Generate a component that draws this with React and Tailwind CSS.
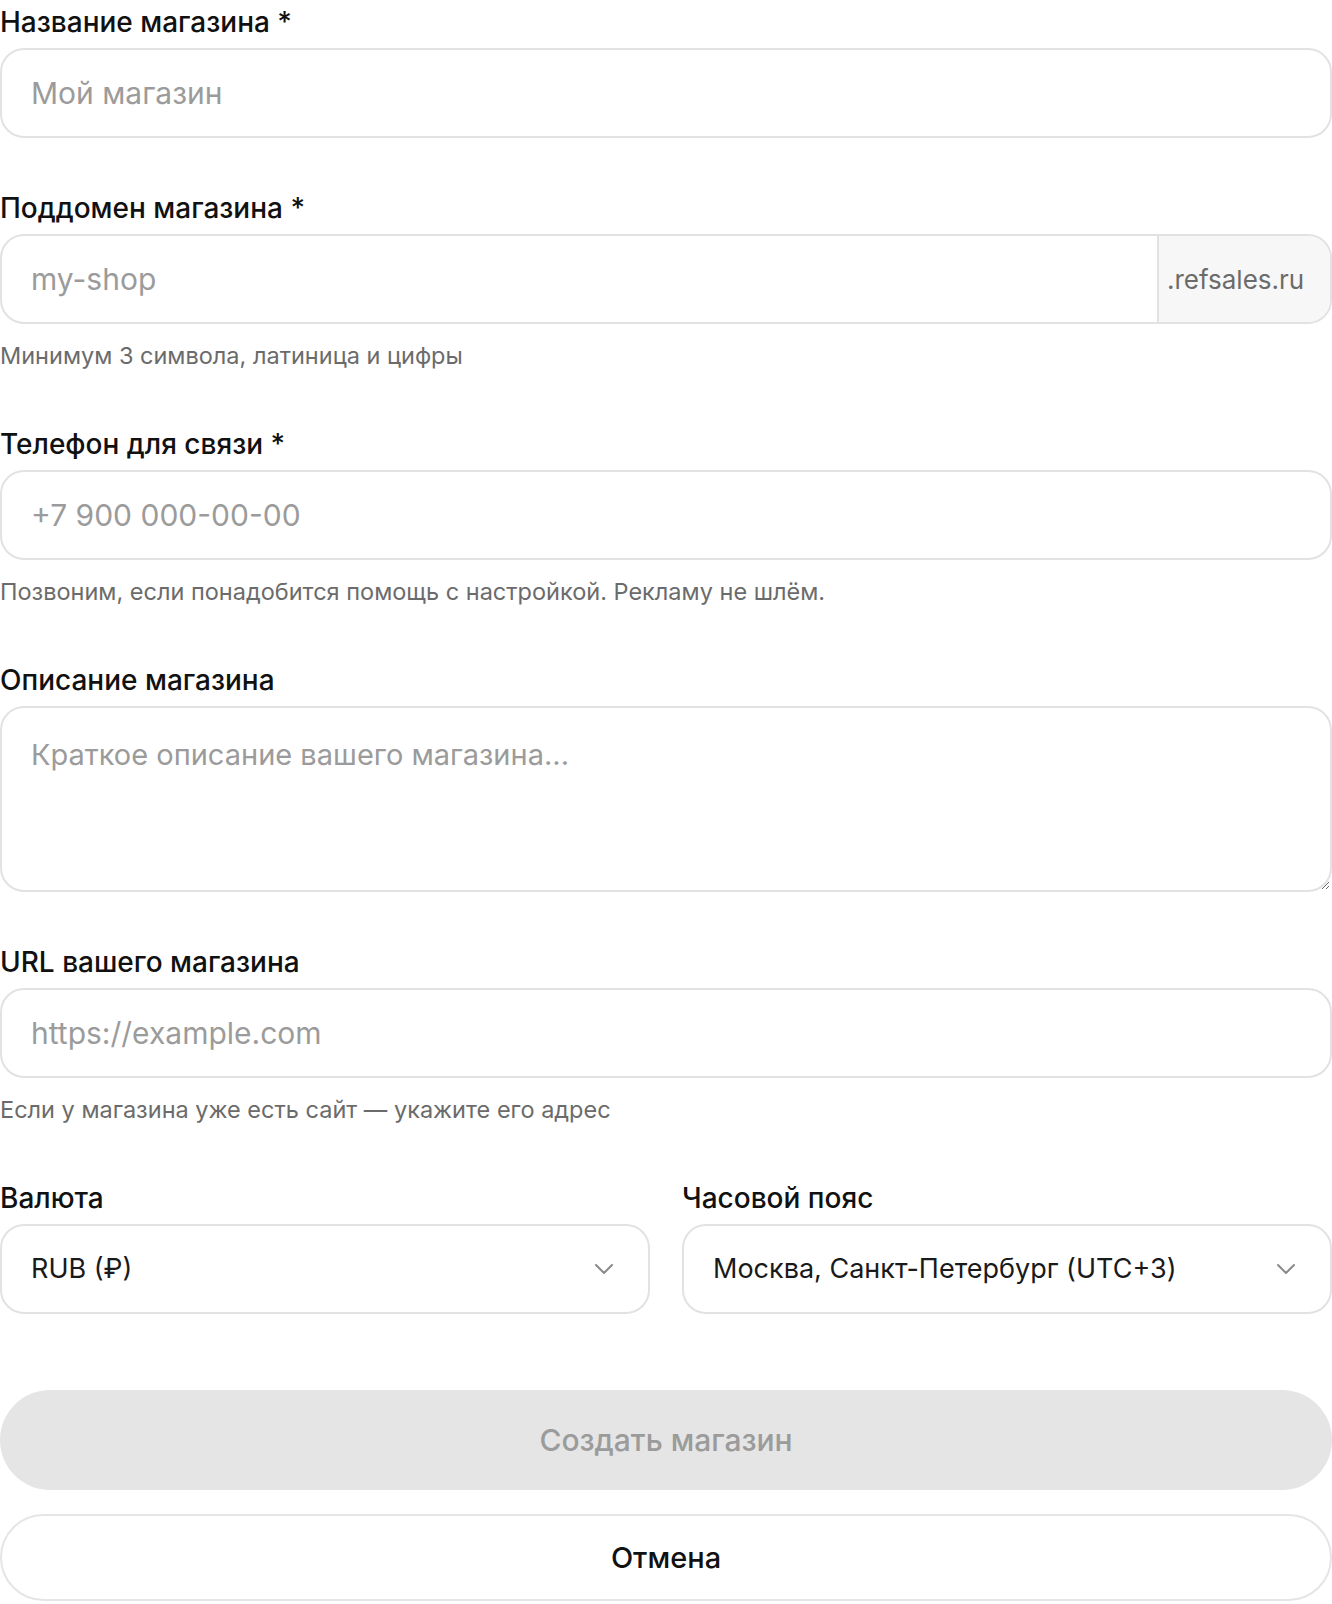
import { useState } from "react";
import { ChevronDown } from "lucide-react";

const labelCls = "block text-[28px] leading-[44px] font-medium text-[#111111] mb-[4px]";
const inputCls =
  "w-full h-[90px] rounded-[24px] border-2 border-[#e2e2e2] bg-white px-[29px] text-[30px] text-[#1a1a1a] placeholder:text-[#9b9b9b] outline-none";
const hintCls = "mt-[14px] text-[23.5px] leading-[36px] text-[#6b6b6b]";

const Field = ({ label, required, hint, children }) => (
  <div>
    <label className={labelCls}>
      {label}
      {required && " *"}
    </label>
    {children}
    {hint && <p className={hintCls}>{hint}</p>}
  </div>
);

const Select = ({ value }) => (
  <div className="flex items-center justify-between h-[90px] rounded-[24px] border-2 border-[#e2e2e2] bg-white pl-[29px] pr-[28px]">
    <span className="text-[27px] text-[#1a1a1a] truncate">{value}</span>
    <ChevronDown size={32} strokeWidth={1.5} className="text-[#8a8a8a] shrink-0" />
  </div>
);

const CreateShopForm = () => {
  const [name, setName] = useState("");
  const [subdomain, setSubdomain] = useState("");
  const [phone, setPhone] = useState("");
  const [description, setDescription] = useState("");
  const [url, setUrl] = useState("");

  const canSubmit = name.length > 0 && subdomain.length >= 3 && phone.length > 0;

  return (
    <div className="w-[1332px] bg-white font-['Inter','Noto_Sans',sans-serif] flex flex-col gap-[48px]">
      <Field label="Название магазина" required>
        <input
          className={inputCls}
          placeholder="Мой магазин"
          value={name}
          onChange={(e) => setName(e.target.value)}
        />
      </Field>

      <Field label="Поддомен магазина" required hint="Минимум 3 символа, латиница и цифры">
        <div className="flex h-[90px] rounded-[24px] border-2 border-[#e2e2e2] bg-white overflow-hidden">
          <input
            className="flex-1 min-w-0 px-[29px] text-[30px] text-[#1a1a1a] placeholder:text-[#9b9b9b] outline-none"
            placeholder="my-shop"
            value={subdomain}
            onChange={(e) => setSubdomain(e.target.value)}
          />
          <div className="w-[173px] flex items-center bg-[#f7f7f7] border-l-2 border-[#e2e2e2] pl-[8px] text-[26px] text-[#6b6b6b]">
            .refsales.ru
          </div>
        </div>
      </Field>

      <Field
        label="Телефон для связи"
        required
        hint="Позвоним, если понадобится помощь с настройкой. Рекламу не шлём."
      >
        <input
          className={inputCls}
          placeholder="+7 900 000-00-00"
          value={phone}
          onChange={(e) => setPhone(e.target.value)}
        />
      </Field>

      <Field label="Описание магазина">
        <textarea
          className="block w-full h-[186px] rounded-[24px] border-2 border-[#e2e2e2] bg-white px-[29px] py-[24px] text-[29px] leading-[45px] text-[#1a1a1a] placeholder:text-[#9b9b9b] outline-none"
          placeholder="Краткое описание вашего магазина..."
          value={description}
          onChange={(e) => setDescription(e.target.value)}
        />
      </Field>

      <Field label="URL вашего магазина" hint="Если у магазина уже есть сайт — укажите его адрес">
        <input
          className={inputCls}
          placeholder="https://example.com"
          value={url}
          onChange={(e) => setUrl(e.target.value)}
        />
      </Field>

      <div className="grid grid-cols-2 gap-[32px]">
        <Field label="Валюта">
          <Select value="RUB (₽)" />
        </Field>
        <Field label="Часовой пояс">
          <Select value="Москва, Санкт-Петербург (UTC+3)" />
        </Field>
      </div>

      <div className="mt-[28px] flex flex-col gap-[24px]">
        <button
          disabled={!canSubmit}
          className="h-[100px] w-full rounded-full bg-[#e5e5e5] text-[30px] font-medium text-[#9b9b9b]"
        >
          Создать магазин
        </button>
        <button className="h-[87px] w-full rounded-full border-2 border-[#e5e5e5] bg-white text-[29px] font-medium text-[#111111]">
          Отмена
        </button>
      </div>
    </div>
  );
};

export default function App() {
  return <CreateShopForm />;
}
